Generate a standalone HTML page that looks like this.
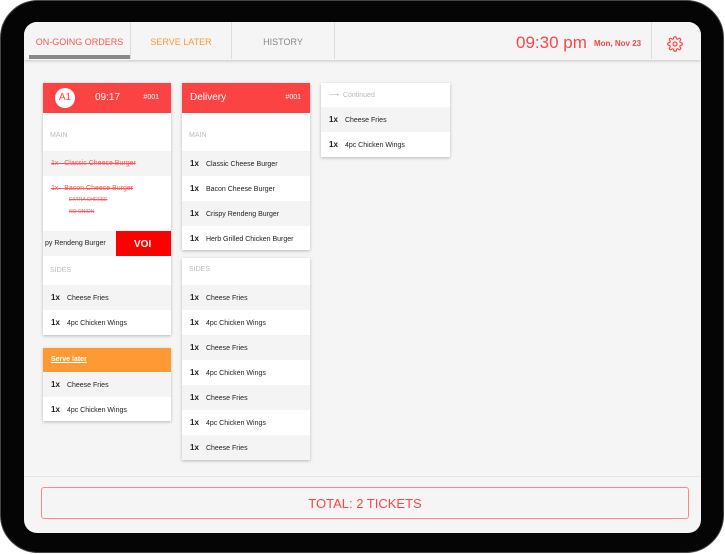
<!DOCTYPE html>
<html><head><style>
*{margin:0;padding:0;box-sizing:border-box}
body{width:725px;height:554px;background:#fff;position:relative;overflow:hidden;font-family:"Liberation Sans",sans-serif}
.frame{position:absolute;left:0;top:0;width:724px;height:553px;background:#050505;border-radius:38px;border:1px solid #444}
.screen{position:absolute;left:24px;top:22px;width:677px;height:511px;background:#f5f5f5;border-radius:13px;overflow:hidden}
.tabs{position:absolute;left:0;top:0;width:677px;height:38px;background:#f5f5f5;box-shadow:0 1px 3px rgba(0,0,0,.2)}
.tab{position:absolute;top:0;height:37px;line-height:40px;font-size:9px;text-align:center;border-right:1px solid #ddd}
.card{position:absolute;background:#fff;box-shadow:0 1px 3px rgba(0,0,0,.25)}
.row{height:25px;line-height:25px;font-size:7px;color:#222;padding-left:8px;position:relative}
.row b{display:inline-block;width:14px;font-size:8px}
.g{background:#f4f4f4}
.lab{font-size:7px;color:#bbb;padding-left:7px}
.hd{background:#fc4343;color:#fff;position:relative;height:30px}
.st{color:#f55;text-decoration:line-through}
</style></head><body>
<div class="frame"></div>
<div class="screen">
 <div class="tabs">
  <div class="tab" style="left:5px;width:101px;color:#f55;border-right:none">ON-GOING ORDERS</div>
  <div style="position:absolute;left:5px;top:33px;width:101px;height:4px;background:#888"></div>
  <div class="tab" style="left:106px;width:102px;color:#f93;border-left:1px solid #ddd">SERVE LATER</div>
  <div class="tab" style="left:208px;width:103px;color:#888">HISTORY</div>
  <div style="position:absolute;left:492px;top:11px;font-size:17px;color:#f44">09:30 pm</div>
  <div style="position:absolute;left:570px;top:17px;font-size:8px;color:#f44;font-weight:bold">Mon, Nov 23</div>
  <div style="position:absolute;left:627px;top:0;height:37px;border-left:1px solid #ddd"></div>
  <svg style="position:absolute;left:643px;top:14px" width="16" height="16" viewBox="0 0 24 24" fill="none" stroke="#f44" stroke-width="1.8"><circle cx="12" cy="12" r="3"/><path d="M19.4 15a1.7 1.7 0 0 0 .3 1.8l.1.1a2 2 0 1 1-2.8 2.8l-.1-.1a1.7 1.7 0 0 0-1.8-.3 1.7 1.7 0 0 0-1 1.5V21a2 2 0 1 1-4 0v-.1a1.7 1.7 0 0 0-1.1-1.5 1.7 1.7 0 0 0-1.8.3l-.1.1a2 2 0 1 1-2.8-2.8l.1-.1a1.7 1.7 0 0 0 .3-1.8 1.7 1.7 0 0 0-1.5-1H3a2 2 0 1 1 0-4h.1a1.7 1.7 0 0 0 1.5-1.1 1.7 1.7 0 0 0-.3-1.8l-.1-.1a2 2 0 1 1 2.8-2.8l.1.1a1.7 1.7 0 0 0 1.8.3H9a1.7 1.7 0 0 0 1-1.5V3a2 2 0 1 1 4 0v.1a1.7 1.7 0 0 0 1 1.5 1.7 1.7 0 0 0 1.8-.3l.1-.1a2 2 0 1 1 2.8 2.8l-.1.1a1.7 1.7 0 0 0-.3 1.8V9a1.7 1.7 0 0 0 1.5 1H21a2 2 0 1 1 0 4h-.1a1.7 1.7 0 0 0-1.5 1z"/></svg>
 </div>

 <!-- card 1 -->
 <div class="card" style="left:19px;top:61px;width:128px;height:252px">
  <div class="hd"><div style="position:absolute;left:12px;top:5px;width:20px;height:20px;border-radius:50%;background:#fff;color:#f44;font-size:10px;line-height:20px;text-align:center">A1</div>
   <div style="position:absolute;left:52px;top:9px;font-size:10px">09:17</div>
   <div style="position:absolute;right:12px;top:11px;font-size:7px">#001</div></div>
  <div class="lab" style="height:38px;line-height:46px">MAIN</div>
  <div class="row g st">1x &nbsp; Classic Cheese Burger</div>
  <div class="row st" style="height:55px;line-height:25px">1x &nbsp; Bacon Cheese Burger
   <div style="position:absolute;left:26px;top:18px;font-size:5px;line-height:12px;text-decoration:line-through">EXTRA CHEESE<br>NO ONION</div></div>
  <div class="row g" style="padding-left:2px">py Rendeng Burger<div style="position:absolute;right:0;top:0;width:55px;height:25px;background:#f00;color:#fff;font-size:10px;font-weight:bold;padding-left:18px;line-height:28px">VOI</div></div>
  <div class="lab" style="height:29px;line-height:29px">SIDES</div>
  <div class="row g"><b>1x</b> Cheese Fries</div>
  <div class="row"><b>1x</b> 4pc Chicken Wings</div>
 </div>
 <div class="card" style="left:19px;top:326px;width:128px;height:73px">
  <div style="height:24px;background:#f93;color:#fff;font-size:7px;line-height:24px;padding-left:8px;text-decoration:underline;font-weight:bold">Serve later</div>
  <div class="row g"><b>1x</b> Cheese Fries</div>
  <div class="row"><b>1x</b> 4pc Chicken Wings</div>
 </div>

 <!-- card 2 -->
 <div class="card" style="left:158px;top:61px;width:128px;height:167px">
  <div class="hd"><div style="position:absolute;left:8px;top:9px;font-size:10px">Delivery</div>
   <div style="position:absolute;right:9px;top:11px;font-size:7px">#001</div></div>
  <div class="lab" style="height:38px;line-height:46px">MAIN</div>
  <div class="row g"><b>1x</b> Classic Cheese Burger</div>
  <div class="row"><b>1x</b> Bacon Cheese Burger</div>
  <div class="row g"><b>1x</b> Crispy Rendeng Burger</div>
  <div class="row"><b>1x</b> Herb Grilled Chicken Burger</div>
 </div>
 <div class="card" style="left:158px;top:236px;width:128px;height:202px">
  <div class="lab" style="height:27px;line-height:24px">SIDES</div>
  <div class="row g"><b>1x</b> Cheese Fries</div>
  <div class="row"><b>1x</b> 4pc Chicken Wings</div>
  <div class="row g"><b>1x</b> Cheese Fries</div>
  <div class="row"><b>1x</b> 4pc Chicken Wings</div>
  <div class="row g"><b>1x</b> Cheese Fries</div>
  <div class="row"><b>1x</b> 4pc Chicken Wings</div>
  <div class="row g"><b>1x</b> Cheese Fries</div>
 </div>

 <!-- card 3 -->
 <div class="card" style="left:297px;top:61px;width:129px;height:74px">
  <div class="row" style="height:24px;color:#bbb">⟶ &nbsp;Continued</div>
  <div class="row g"><b>1x</b> Cheese Fries</div>
  <div class="row"><b>1x</b> 4pc Chicken Wings</div>
 </div>

 <div style="position:absolute;left:0;top:454px;width:677px;border-top:1px solid #e6e6e6"></div>
 <div style="position:absolute;left:17px;top:465px;width:648px;height:32px;border:1px solid #f88;border-radius:3px;color:#f44;font-size:13px;text-align:center;line-height:32px">TOTAL: 2 TICKETS</div>
</div>
</body></html>
